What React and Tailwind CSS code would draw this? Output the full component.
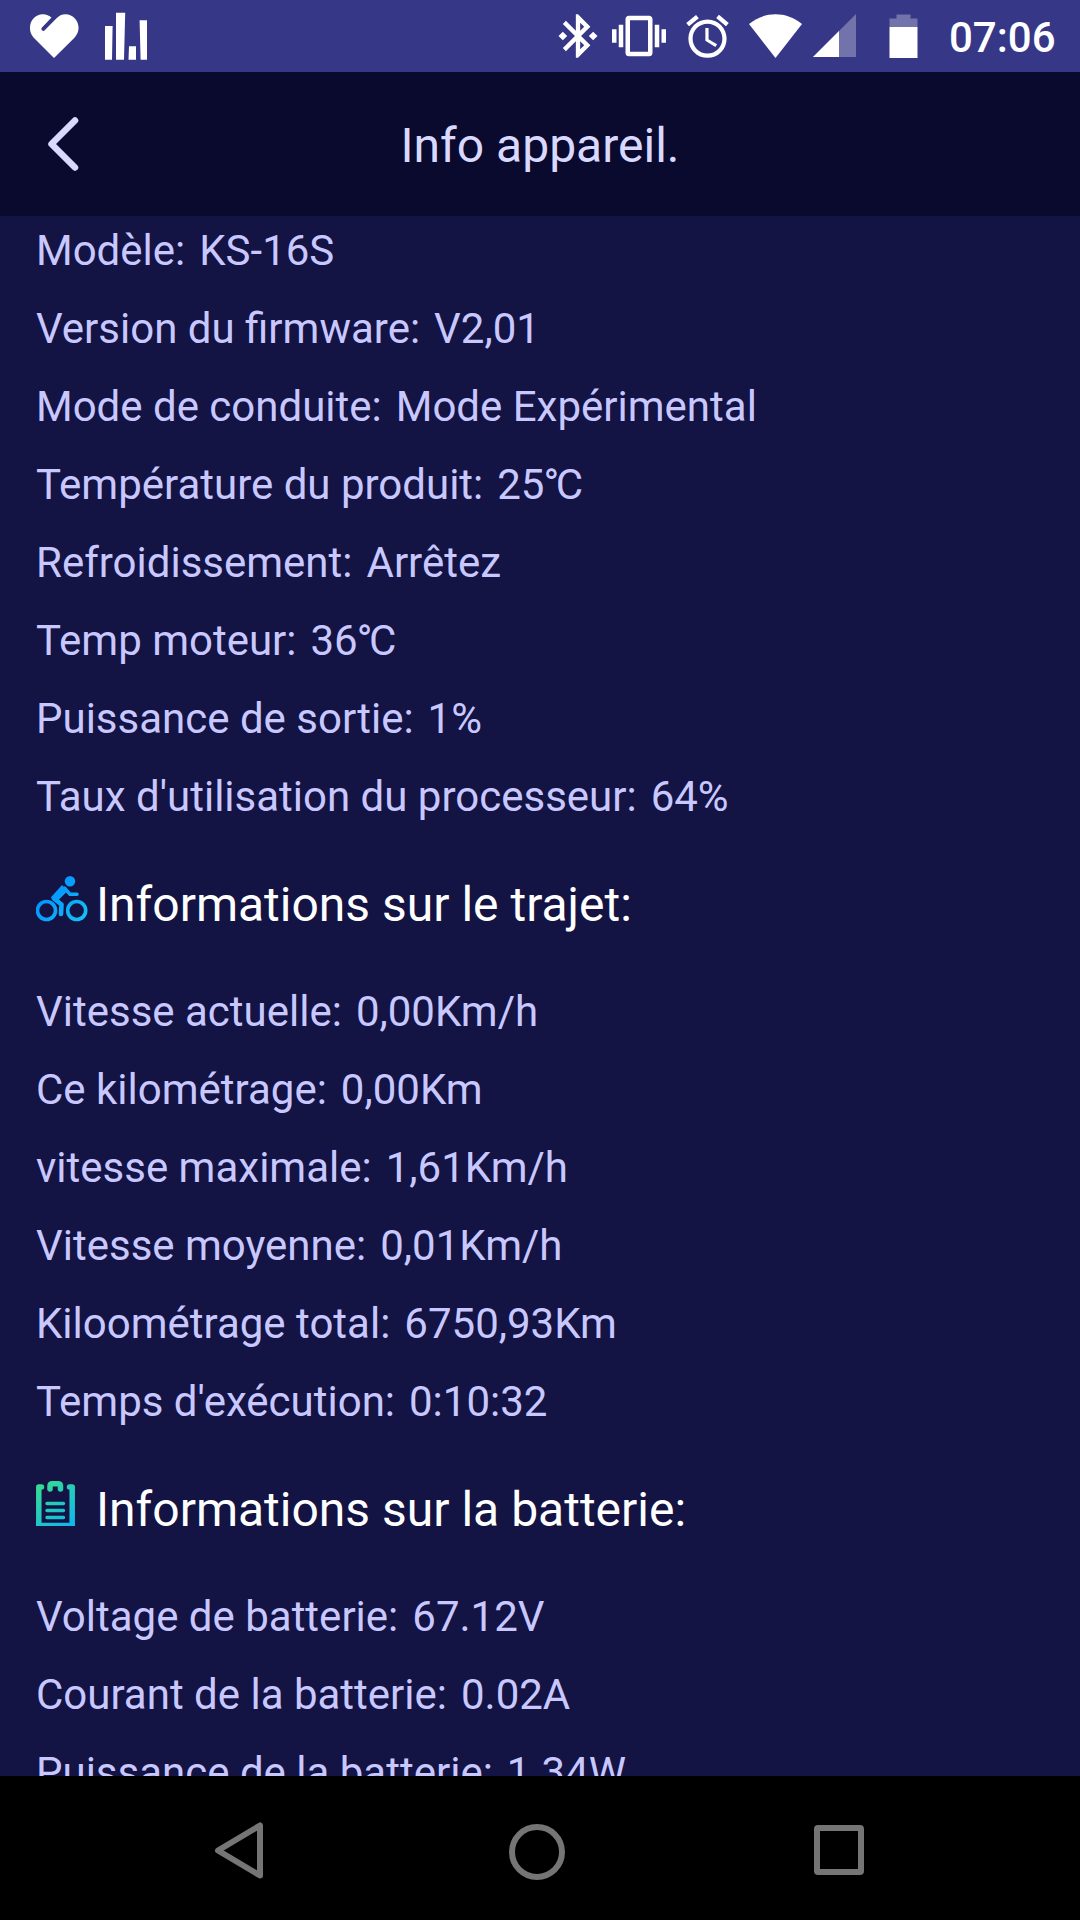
import React from 'react';

const Celsius = () => (
  <span>
    <span className="-ml-px tracking-[-3.5px]">°</span>C
  </span>
);

const deviceInfo = [
  ['Modèle:', 'KS-16S'],
  ['Version du firmware:', 'V2,01'],
  ['Mode de conduite:', 'Mode Expérimental'],
  ['Température du produit:', <>25<Celsius /></>],
  ['Refroidissement:', 'Arrêtez'],
  ['Temp moteur:', <>36<Celsius /></>],
  ['Puissance de sortie:', '1%'],
  ["Taux d'utilisation du processeur:", '64%'],
];

const tripInfo = [
  ['Vitesse actuelle:', '0,00Km/h'],
  ['Ce kilométrage:', '0,00Km'],
  ['vitesse maximale:', '1,61Km/h'],
  ['Vitesse moyenne:', '0,01Km/h'],
  ['Kiloométrage total:', '6750,93Km'],
  ["Temps d'exécution:", '0:10:32'],
];

const batteryInfo = [
  ['Voltage de batterie:', '67.12V'],
  ['Courant de la batterie:', '0.02A'],
  ['Puissance de la batterie:', '1.34W'],
];

const StatusBar = () => (
  <div className="flex h-[72px] shrink-0 items-center bg-[#373788] pl-[29px] pr-[24px] text-white">
    {/* Notifications */}
    <svg className="h-[72px] w-[51px]" viewBox="29 0 51 72" fill="currentColor">
      <path d="M54 58L33.500 37.400C26 29 31 14.300 43 14.300c3.400 0 6.200 1.200 8.700 3.500L42 27.500a1.800 1.800 0 0 0 2.700 2.700L56.300 18.600c2.700-2.800 5.500-4.300 9.200-4.300C77 14.300 83 28.500 74.700 37.400Z" />
      <path d="M52.600 18.600L43.600 28.400" stroke="#373788" strokeWidth="3" strokeLinecap="round" />
    </svg>
    <svg className="ml-[24px] h-[72px] w-[44px]" viewBox="104 0 44 72" fill="currentColor">
      <path d="M105 26h7.600l-.6 33.700h-7zM116 12.700h9.200l-1.200 47h-8zM129 46.300h7v13.400h-7.500zM139.600 20.200h7.400v39.500h-6.400z" />
    </svg>
    {/* System icons */}
    <svg className="ml-auto h-[52px] w-[52px]" viewBox="0 0 24 24" fill="currentColor">
      <path d="M7 12l-2-2-2 2 2 2 2-2zm10.710-4.290L12 2h-1v7.590L6.410 5 5 6.410 10.590 12 5 17.590 6.410 19 11 14.410V22h1l5.710-5.710-4.300-4.290 4.300-4.290zM13 5.830l1.880 1.880L13 9.590V5.830zm1.880 10.460L13 18.170v-3.760l1.880 1.880zM19 10l-2 2 2 2 2-2-2-2z" />
    </svg>
    <svg className="ml-[8px] h-[54px] w-[54px]" viewBox="0 0 24 24" fill="currentColor">
      <path d="M0 15h2V9H0v6zm3 2h2V7H3v10zm19-8v6h2V9h-2zm-3 8h2V7h-2v10zM16.500 3h-9C6.670 3 6 3.670 6 4.500v15c0 .83.67 1.500 1.500 1.500h9c.83 0 1.500-.67 1.500-1.500v-15c0-.83-.67-1.500-1.500-1.500zM16 19H8V5h8v14z" />
    </svg>
    <svg className="ml-[16px] h-[51px] w-[51px]" viewBox="0 0 24 24" fill="currentColor">
      <path d="M22 5.700l-4.600-3.900-1.300 1.500 4.600 3.900L22 5.700zM7.900 3.400L6.600 1.900 2 5.700l1.300 1.500 4.600-3.800zM12.500 8H11v6l4.700 2.900.8-1.200-4-2.400V8zM12 4c-5 0-9 4-9 9s4 9 9 9 9-4 9-9-4-9-9-9zm0 16c-3.900 0-7-3.100-7-7s3.100-7 7-7 7 3.100 7 7-3.100 7-7 7z" />
    </svg>
    <svg className="ml-[16px] h-[72px] w-[53px]" viewBox="749 0 53 72" fill="currentColor">
      <path d="M749 24C765 11 786 11 802 24L775.500 58Z" />
    </svg>
    <svg className="ml-[11px] h-[72px] w-[43px]" viewBox="813 0 43 72" fill="currentColor">
      <path fillOpacity=".3" d="M813 57L856 14V57Z" />
      <path d="M813 57L839 31V57Z" />
    </svg>
    <svg className="ml-[33px] h-[72px] w-[29px]" viewBox="889.5 0 29 72" fill="currentColor">
      <path fillOpacity=".3" d="M890 27V18.500H897V14.500H911V18.500H918V27Z" />
      <path d="M890 27H918V58H890Z" />
    </svg>
    <span className="ml-[31px] w-[107px] whitespace-nowrap pt-1 text-[42px] font-medium leading-[74px]">07:06</span>
  </div>
);

const Header = () => (
  <header className="relative flex h-[144px] shrink-0 items-center justify-center bg-[#0a092e] text-[#d9d9ff]">
    <svg className="absolute left-[46px] top-[43px] h-[58px] w-[36px]" viewBox="46 115 36 58" fill="none" stroke="currentColor" strokeWidth="6.5" strokeLinecap="round" strokeLinejoin="round">
      <path d="M75 120.500L51.500 144L75 167.500" />
    </svg>
    <h1 className="pt-1 text-[48px] leading-none">Info appareil.</h1>
  </header>
);

const BikeIcon = () => (
  <svg className="h-[46px] w-[52px]" viewBox="0 0 52 46" fill="none">
    <defs>
      <linearGradient id="bike" x1="10" y1="6" x2="50" y2="46" gradientUnits="userSpaceOnUse">
        <stop offset="0" stopColor="#008cff" />
        <stop offset="1" stopColor="#17c3f5" />
      </linearGradient>
    </defs>
    <g stroke="url(#bike)" strokeLinecap="round" strokeLinejoin="round">
      <circle cx="10.500" cy="34.500" r="9" strokeWidth="3.600" />
      <circle cx="40.700" cy="34.500" r="9" strokeWidth="3.600" />
      <path strokeWidth="4.600" d="M18 22.500L25.500 28.500L25 38" />
      <path strokeWidth="3.500" d="M28.500 12L34 18.300H41" />
    </g>
    <path fill="url(#bike)" d="M26 9L14.800 21.500L20 26.500L31.500 15Z" />
    <circle cx="34" cy="5.200" r="5.200" fill="url(#bike)" />
  </svg>
);

const ClipboardIcon = () => (
  <svg className="h-[45px] w-[39px]" viewBox="0 0 39 45" fill="none">
    <defs>
      <linearGradient id="clip" x1="4" y1="2" x2="39" y2="45" gradientUnits="userSpaceOnUse">
        <stop offset="0" stopColor="#38dc91" />
        <stop offset="1" stopColor="#0db4f0" />
      </linearGradient>
    </defs>
    <g stroke="url(#clip)">
      <path strokeWidth="5.500" strokeLinecap="round" strokeLinejoin="round" d="M5.500 6H2.800V43M33.500 6H36.200V43" />
      <path strokeWidth="3.200" d="M0 43.400H39" />
      <path strokeWidth="5.500" strokeLinecap="round" strokeLinejoin="round" d="M14 8V5Q14 2.800 16.500 2.800H22Q24.500 2.800 24.500 5V8" />
      <path strokeWidth="3.400" strokeLinecap="round" d="M11 22.500L27.500 22.510M11 29.500L27.500 29.510M11 36.500L27.500 36.510" />
    </g>
  </svg>
);

const Rows = ({ items }) => (
  <ul>
    {items.map(([label, value]) => (
      <li key={label} className="flex h-[78px] items-center gap-[14px] whitespace-nowrap text-[42px] leading-[78px]">
        <span>{label}</span>
        <span>{value}</span>
      </li>
    ))}
  </ul>
);

const SectionTitle = ({ icon, children }) => (
  <div className="flex h-[137px] items-center text-[48px] text-white">
    <div className="w-[60px] pb-3">{icon}</div>
    <h2 className="whitespace-nowrap leading-none">{children}</h2>
  </div>
);

const NavBar = () => (
  <nav className="h-[144px] shrink-0 bg-black">
    <svg className="h-[144px] w-[1080px]" viewBox="0 1776 1080 144" fill="none" stroke="#757575" strokeWidth="6" strokeLinejoin="round">
      <path d="M218 1850.500L260 1825.500V1875.500Z" />
      <circle cx="537" cy="1852" r="25" />
      <rect x="817" y="1828" width="44" height="44" rx="1" />
    </svg>
  </nav>
);

const App = () => {
  return (
    <div className="flex h-[1920px] w-[1080px] flex-col overflow-hidden bg-[#131344] font-['Roboto',sans-serif]">
      <StatusBar />
      <Header />
      <main className="min-h-0 flex-1 overflow-hidden px-[36px] text-[#c8c8ff]">
        <div className="-mt-1">
          <Rows items={deviceInfo} />
          <SectionTitle icon={<BikeIcon />}>Informations sur le trajet:</SectionTitle>
          <Rows items={tripInfo} />
          <SectionTitle icon={<ClipboardIcon />}>Informations sur la batterie:</SectionTitle>
          <Rows items={batteryInfo} />
        </div>
      </main>
      <NavBar />
    </div>
  );
};

export default App;
